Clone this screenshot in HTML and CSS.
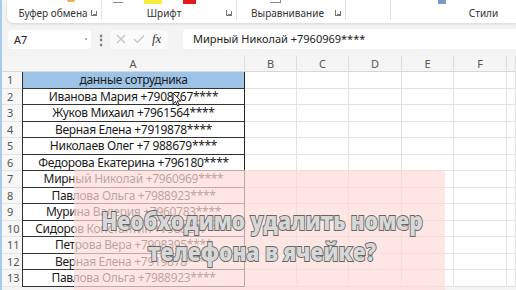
FILE: index.html
```html
<!DOCTYPE html>
<html>
<head>
  <title>Excel - данные сотрудника</title>
  <meta charset="UTF-8">
  <link rel="stylesheet" href="styles.css">
</head>
<body>
  <div class="app">
    <div class="ribbon">
      <div class="group clipboard">
        <span class="peek peek-paste"></span>
        <span class="label">Буфер обмена</span>
        <span class="launcher"></span>
      </div>
      <div class="group font">
        <span class="peek peek-icon"></span>
        <span class="peek peek-yellow"></span>
        <span class="peek peek-red"></span>
        <span class="label">Шрифт</span>
        <span class="launcher"></span>
      </div>
      <div class="group align">
        <span class="peek peek-align"></span>
        <span class="label">Выравнивание</span>
        <span class="launcher"></span>
      </div>
      <div class="group number"></div>
      <div class="group styles">
        <span class="peek peek-styles"></span>
        <span class="label">Стили</span>
      </div>
    </div>

    <div class="formula-bar">
      <div class="name-box">
        <span>A7</span>
        <span class="caret"></span>
      </div>
      <div class="dots">⋮</div>
      <div class="fx-box">
        <svg width="10" height="10" viewBox="0 0 10 10"><path d="M1 1 L9 9 M9 1 L1 9" stroke="#c4c4c4" stroke-width="1.2" fill="none"/></svg>
        <svg width="12" height="10" viewBox="0 0 12 10"><path d="M1 5 L4.5 8.5 L11 1.5" stroke="#c4c4c4" stroke-width="1.2" fill="none"/></svg>
        <span class="fx">fx</span>
      </div>
      <div class="formula-input">Мирный Николай +7960969****</div>
    </div>

    <div class="sheet">
      <div class="corner"></div>
      <div class="col-head">A</div>
      <div class="col-head">B</div>
      <div class="col-head">C</div>
      <div class="col-head">D</div>
      <div class="col-head">E</div>
      <div class="col-head">F</div>
      <div class="col-head"></div>

      <div class="row-head">1</div>
      <div class="cell a head-cell">данные сотрудника</div>
      <div class="cell"></div><div class="cell"></div><div class="cell"></div><div class="cell"></div><div class="cell"></div><div class="cell"></div>

      <div class="row-head">2</div>
      <div class="cell a">Иванова Мария +7908767****</div>
      <div class="cell"></div><div class="cell"></div><div class="cell"></div><div class="cell"></div><div class="cell"></div><div class="cell"></div>

      <div class="row-head">3</div>
      <div class="cell a">Жуков Михаил +7961564****</div>
      <div class="cell"></div><div class="cell"></div><div class="cell"></div><div class="cell"></div><div class="cell"></div><div class="cell"></div>

      <div class="row-head">4</div>
      <div class="cell a">Верная Елена +7919878****</div>
      <div class="cell"></div><div class="cell"></div><div class="cell"></div><div class="cell"></div><div class="cell"></div><div class="cell"></div>

      <div class="row-head">5</div>
      <div class="cell a">Николаев Олег +7 988679****</div>
      <div class="cell"></div><div class="cell"></div><div class="cell"></div><div class="cell"></div><div class="cell"></div><div class="cell"></div>

      <div class="row-head">6</div>
      <div class="cell a">Федорова Екатерина +796180****</div>
      <div class="cell"></div><div class="cell"></div><div class="cell"></div><div class="cell"></div><div class="cell"></div><div class="cell"></div>

      <div class="row-head">7</div>
      <div class="cell a">Мирный Николай +7960969****</div>
      <div class="cell"></div><div class="cell"></div><div class="cell"></div><div class="cell"></div><div class="cell"></div><div class="cell"></div>

      <div class="row-head">8</div>
      <div class="cell a">Павлова Ольга +7988923****</div>
      <div class="cell"></div><div class="cell"></div><div class="cell"></div><div class="cell"></div><div class="cell"></div><div class="cell"></div>

      <div class="row-head">9</div>
      <div class="cell a">Мурина Валерия +7960783****</div>
      <div class="cell"></div><div class="cell"></div><div class="cell"></div><div class="cell"></div><div class="cell"></div><div class="cell"></div>

      <div class="row-head">10</div>
      <div class="cell a">Сидоров Константин +7988257****</div>
      <div class="cell"></div><div class="cell"></div><div class="cell"></div><div class="cell"></div><div class="cell"></div><div class="cell"></div>

      <div class="row-head">11</div>
      <div class="cell a">Петрова Вера +7908395****</div>
      <div class="cell"></div><div class="cell"></div><div class="cell"></div><div class="cell"></div><div class="cell"></div><div class="cell"></div>

      <div class="row-head">12</div>
      <div class="cell a">Верная Елена +7919878****</div>
      <div class="cell"></div><div class="cell"></div><div class="cell"></div><div class="cell"></div><div class="cell"></div><div class="cell"></div>

      <div class="row-head">13</div>
      <div class="cell a">Павлова Ольга +7988923****</div>
      <div class="cell"></div><div class="cell"></div><div class="cell"></div><div class="cell"></div><div class="cell"></div><div class="cell"></div>
    </div>

    <!-- mouse pointer over A2 -->
    <svg class="cursor" width="10" height="15" viewBox="0 0 10 15">
      <path d="M1 1 L1 12 L3.6 9.6 L5.6 14 L7.2 13.3 L5.3 9 L8.8 9 Z" fill="#fff" stroke="#222" stroke-width="1"/>
    </svg>

    <!-- video caption overlay -->
    <div class="caption-bg"></div>
    <div class="caption">
      <div>Необходимо удалить номер</div>
      <div>телефона в ячейке?</div>
    </div>
  </div>
</body>
</html>
```

FILE: styles.css
```css
body {
  margin: 0;
  background: #f3f3f3;
  font-family: 'Noto Sans', 'Open Sans', sans-serif;
}
.app {
  position: relative;
  width: 516px;
  height: 290px;
  overflow: hidden;
  background: #f3f3f3;
  border-left: 2px solid #a8cbe9;
  box-sizing: border-box;
}

/* ribbon */
.ribbon {
  display: flex;
  height: 23px;
  margin-left: 5px;
  background: #fff;
  border-radius: 0 0 0 6px;
  box-shadow: 0 1px 3px rgba(0,0,0,0.12);
}
.group {
  position: relative;
  display: flex;
  align-items: flex-end;
  box-sizing: border-box;
  border-right: 1px solid #e2e2e2;
  margin: 0 0 3px 0;
}
.group .label {
  flex: 1;
  text-align: center;
  font-size: 10px;
  color: #333;
  line-height: 14px;
}
.launcher {
  width: 5px;
  height: 5px;
  margin: 0 4px 4px 0;
  border-left: 1px solid #777;
  border-bottom: 1px solid #777;
  position: relative;
}
.launcher::after {
  content: "";
  position: absolute;
  left: 1px;
  top: 1px;
  width: 3px;
  height: 3px;
  border-right: 1px solid #777;
  border-bottom: 1px solid #777;
}
.clipboard { width: 95px; padding-left: 8px; }
.font { width: 135px; }
.align { width: 109px; padding-left: 3px; }
.number { width: 45px; }
.styles { flex: 1; border-right: none; padding-left: 60px; }

.peek {
  position: absolute;
  top: 0;
}
.peek-paste { left: 60px; width: 8px; height: 2px; background: #e8b24a; border-radius: 0 0 3px 3px; }
.peek-icon { left: 11px; width: 10px; height: 2px; border-bottom: 1px solid #888; }
.peek-yellow { left: 42px; width: 18px; height: 4px; background: #f7ee3c; }
.peek-red { left: 81px; width: 13px; height: 4px; background: #e11b1b; }
.peek-align { left: 33px; width: 10px; height: 2px; border-bottom: 1px solid #888; border-right: 1px solid #888; }
.peek-styles { left: 47px; width: 8px; height: 4px; background: #7a9ac6; }

/* formula bar */
.formula-bar {
  display: flex;
  align-items: center;
  height: 22px;
  margin-top: 5px;
  padding-left: 6px;
}
.name-box {
  display: flex;
  align-items: center;
  justify-content: space-between;
  width: 83px;
  height: 19px;
  box-sizing: border-box;
  padding: 0 4px 0 6px;
  background: #fff;
  border-radius: 4px;
  font-size: 11px;
  color: #222;
}
.caret {
  width: 2px;
  height: 2px;
  background: #999;
  border-radius: 1px;
}
.dots {
  width: 19px;
  text-align: center;
  font-size: 12px;
  color: #666;
  font-weight: bold;
}
.fx-box {
  display: flex;
  align-items: center;
  gap: 7px;
  width: 58px;
  height: 19px;
  box-sizing: border-box;
  padding-left: 6px;
  background: #fafafa;
  border-radius: 4px;
}
.fx {
  font-family: 'Liberation Serif', serif;
  font-style: italic;
  font-size: 13px;
  color: #333;
}
.formula-input {
  flex: 1;
  height: 20px;
  margin-left: 15px;
  padding-left: 10px;
  background: #fff;
  border-radius: 4px 0 0 4px;
  font-size: 11px;
  line-height: 20px;
  color: #222;
}

/* sheet */
.sheet {
  display: grid;
  grid-template-columns: 22px 223px 52px 52px 53px 52px 53px 1fr;
  grid-template-rows: 16px repeat(13, 16.5px);
  margin-top: 6px;
  margin-left: -2px;
  background: #fff;
}
.corner {
  background: #f5f5f5;
  border-bottom: 1px solid #d6d6d6;
}
.col-head {
  background: #f5f5f5;
  border-bottom: 1px solid #d6d6d6;
  border-right: 1px solid #dedede;
  text-align: center;
  font-size: 11px;
  line-height: 15px;
  color: #555;
}
.row-head {
  background: #f7f7f7;
  border-bottom: 1px solid #e4e4e4;
  padding-left: 7px;
  font-size: 11px;
  line-height: 16px;
  color: #555;
}
.cell {
  border-right: 1px solid #e2e2e2;
  border-bottom: 1px solid #e2e2e2;
}
.cell.a {
  border-left: 1px solid #333;
  border-right: 1px solid #222;
  border-bottom: 1px solid #333;
  text-align: center;
  font-family: 'Noto Sans', sans-serif;
  font-size: 12px;
  letter-spacing: -0.3px;
  line-height: 16px;
  color: #1a1a1a;
  white-space: nowrap;
  overflow: hidden;
}
.cell.head-cell {
  background: #9dc3e6;
}

.cursor {
  position: absolute;
  left: 170px;
  top: 92px;
}

.caption-bg {
  position: absolute;
  left: 72px;
  top: 170px;
  width: 371px;
  height: 120px;
  background: rgba(252, 220, 215, 0.7);
}
.caption {
  position: absolute;
  left: 72px;
  top: 206px;
  width: 376px;
  text-align: center;
  font-family: 'Open Sans', 'Noto Sans', sans-serif;
  font-weight: 800;
  font-size: 21px;
  line-height: 27px;
  color: #d8d8d8;
  -webkit-text-stroke: 1.6px #666;
  paint-order: stroke fill;
  transform: scaleY(1.15);
  transform-origin: top center;
}
```
